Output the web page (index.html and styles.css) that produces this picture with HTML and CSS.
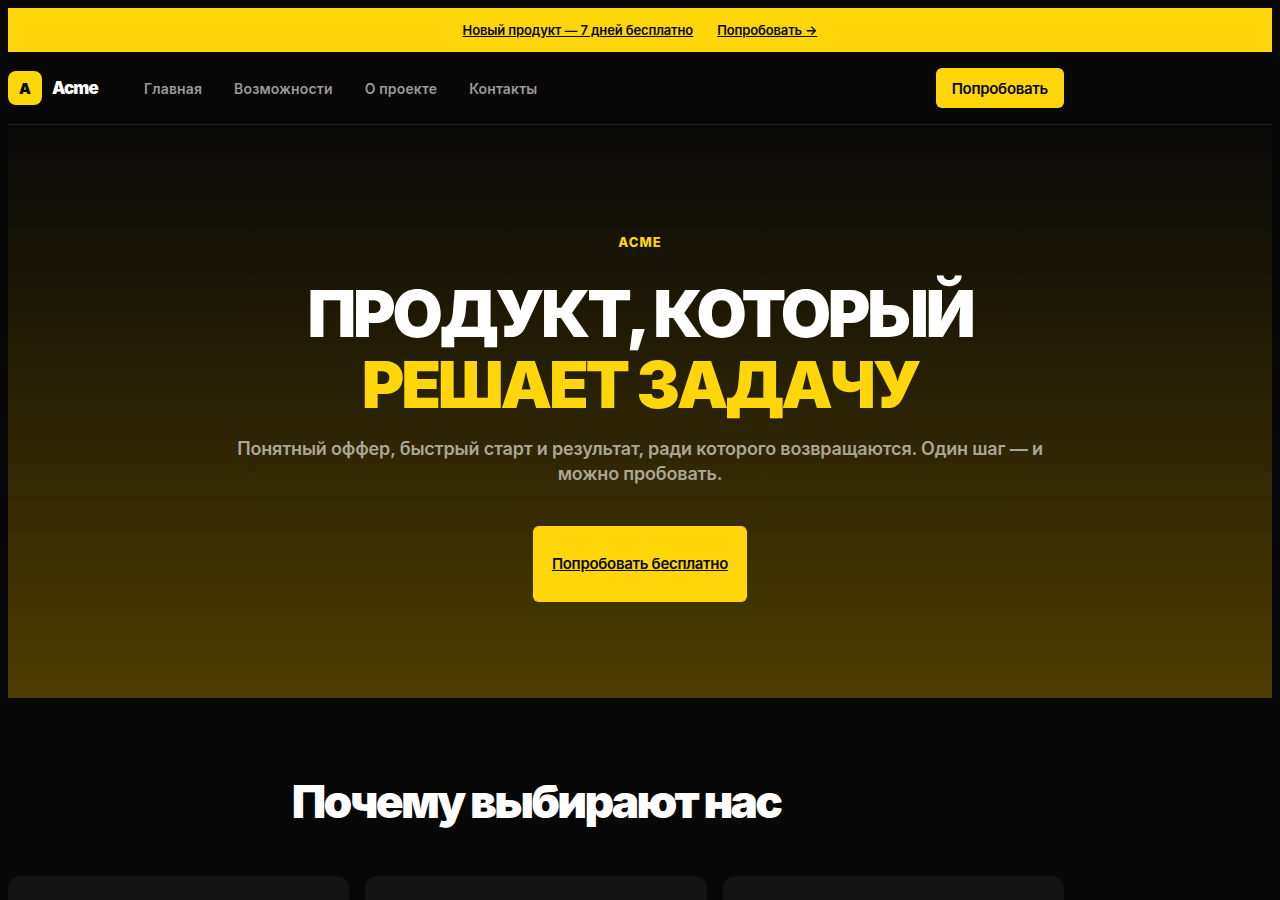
FILE: index.html
```html
<!DOCTYPE html>
<html lang="ru">
<head>
    <meta charset="UTF-8">
    <meta name="viewport" content="width=device-width, initial-scale=1.0">
    <title>Acme</title>
    <link rel="stylesheet" href="styles.css">
</head>
<body>

<div class="promo">
    <a href="#try">Новый продукт — 7 дней бесплатно</a>
    <a href="#try">Попробовать →</a>
</div>

<header class="header">
    <div class="container header-inner">
        <a class="logo" href="#"><span class="logo-mark">A</span>Acme</a>
        <nav class="nav">
            <a href="#">Главная</a>
            <a href="#features">Возможности</a>
            <a href="#about">О проекте</a>
            <a href="#contacts">Контакты</a>
        </nav>
        <button class="header-btn" type="button">Попробовать</button>
    </div>
</header>

<main>
    <section class="hero">
        <div class="hero-label">ACME</div>
        <h1>ПРОДУКТ, КОТОРЫЙ<br><span class="accent">РЕШАЕТ ЗАДАЧУ</span></h1>
        <p class="hero-text">Понятный оффер, быстрый старт и результат, ради которого возвращаются. Один шаг — и можно пробовать.</p>
        <a class="hero-btn" id="try" href="#try">Попробовать бесплатно</a>
    </section>

    <section class="features" id="features">
        <div class="container">
            <h2>Почему выбирают нас</h2>
            <div class="cards">
                <div class="card"></div>
                <div class="card"></div>
                <div class="card"></div>
            </div>
        </div>
    </section>
</main>

</body>
</html>
```

FILE: styles.css
```css
body {
    margin: 8px;
    font-family: Inter, sans-serif;
    background-color: #080808;
    color: white;
    -webkit-font-smoothing: antialiased;
}

.container {
    max-width: 1056px;
}

.promo {
    display: flex;
    justify-content: center;
    align-items: center;
    gap: 24px;
    min-height: 44px;
    background-color: #ffd60a;
    font-size: 13px;
    font-weight: 600;
    letter-spacing: -0.01em;
}

.promo a {
    color: #080808;
}

.header {
    border-bottom: 1px solid #222;
}

.header-inner {
    display: flex;
    align-items: center;
    min-height: 72px;
}

.logo {
    display: flex;
    align-items: center;
    gap: 10px;
    color: white;
    font-size: 17px;
    font-weight: 900;
    letter-spacing: -0.05em;
    text-decoration: none;
}

.logo-mark {
    display: flex;
    align-items: center;
    justify-content: center;
    width: 34px;
    height: 34px;
    border-radius: 8px;
    background-color: #ffd60a;
    color: #080808;
    font-size: 15px;
    font-weight: 900;
    letter-spacing: 0;
}

.nav {
    display: flex;
    gap: 32px;
    margin-left: 46px;
}

.nav a {
    color: #999;
    font-size: 14px;
    font-weight: 600;
    letter-spacing: 0.01em;
    text-decoration: none;
}

.header-btn {
    margin-left: auto;
    height: 40px;
    padding: 0 16px;
    border: none;
    border-radius: 6px;
    background-color: #ffd60a;
    color: #080808;
    font-family: inherit;
    font-size: 15px;
    font-weight: 600;
    letter-spacing: -0.02em;
    cursor: pointer;
}

.hero {
    display: flex;
    flex-direction: column;
    align-items: center;
    padding: 109px 24px 96px;
    background: linear-gradient(#080808, #4d3d00);
    text-align: center;
}

.hero-label {
    color: #ffd60a;
    font-size: 13px;
    font-weight: 800;
    line-height: 16px;
    letter-spacing: 0.08em;
}

h1 {
    margin: 28px 0 16px;
    font-size: 65px;
    font-weight: 900;
    line-height: 71px;
    letter-spacing: -0.05em;
}

.accent {
    color: #ffd60a;
}

.hero-text {
    max-width: 820px;
    margin: 0 0 40px;
    color: #aaa793;
    font-size: 18px;
    font-weight: 600;
    line-height: 25px;
    letter-spacing: -0.01em;
}

.hero-btn {
    padding: 28px 19px;
    border-radius: 6px;
    background-color: #ffd60a;
    color: #080808;
    font-size: 15px;
    font-weight: 600;
    line-height: 20px;
    letter-spacing: -0.02em;
}

.features {
    padding: 74px 0;
}

h2 {
    margin: 0 0 46px;
    font-size: 46px;
    font-weight: 900;
    line-height: 58px;
    letter-spacing: -0.06em;
    text-align: center;
}

.cards {
    display: grid;
    grid-template-columns: repeat(3, 1fr);
    gap: 16px;
}

.card {
    min-height: 200px;
    border-radius: 12px;
    background-color: #141414;
}
```
